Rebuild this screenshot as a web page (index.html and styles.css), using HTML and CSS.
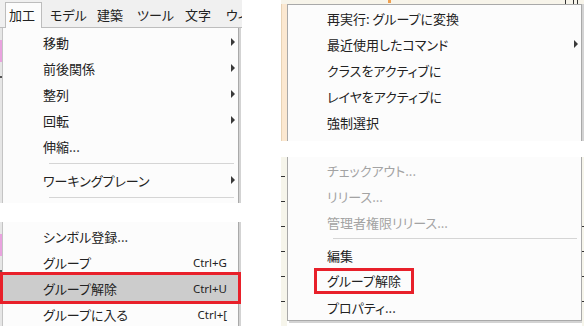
FILE: index.html
```html
<!DOCTYPE html>
<html lang="ja">
  <head>
    <meta charset="UTF-8" />
    <meta name="viewport" content="width=device-width, initial-scale=1.0" />
    <title>加工メニューとコンテキストメニュー</title>
    <link rel="stylesheet" href="styles.css">
  </head>
  <body>
    <div class="shot">
      <!-- Left: menu bar with the 加工 menu open -->
      <section class="panel-left">
        <div class="menubar">
          <span class="menubar-item is-open">加工</span>
          <span class="menubar-item w47">モデル</span>
          <span class="menubar-item w40">建築</span>
          <span class="menubar-item w48">ツール</span>
          <span class="menubar-item w41">文字</span>
          <span class="menubar-item">ウィンドウ</span>
        </div>

        <div class="part part-left-top">
          <div class="edge edge-left"></div>
          <div class="dropdown">
            <div class="row has-sub">移動<span class="arrow"></span></div>
            <div class="row has-sub">前後関係<span class="arrow"></span></div>
            <div class="row has-sub">整列<span class="arrow"></span></div>
            <div class="row has-sub">回転<span class="arrow"></span></div>
            <div class="row">伸縮...</div>
            <div class="sep"></div>
            <div class="row has-sub">ワーキングプレーン<span class="arrow"></span></div>
            <div class="sep"></div>
          </div>
        </div>

        <div class="cut cut-left"></div>

        <div class="part part-left-bottom">
          <div class="edge edge-left"></div>
          <div class="dropdown">
            <div class="row">シンボル登録...</div>
            <div class="row">グループ<span class="shortcut">Ctrl+G</span></div>
            <div class="row is-hover marked">グループ解除<span class="shortcut">Ctrl+U</span></div>
            <div class="row">グループに入る<span class="shortcut">Ctrl+[</span></div>
          </div>
        </div>
      </section>

      <!-- Right: context menu on the drawing area -->
      <section class="panel-right">
        <div class="topband"></div>

        <div class="part part-right-top">
          <div class="edge edge-peach"></div>
          <div class="ctx ctx-top">
            <div class="row">再実行: グループに変換</div>
            <div class="row has-sub">最近使用したコマンド<span class="arrow"></span></div>
            <div class="row">クラスをアクティブに</div>
            <div class="row">レイヤをアクティブに</div>
            <div class="row">強制選択</div>
          </div>
        </div>

        <div class="cut cut-right"></div>

        <div class="part part-right-bottom">
          <div class="edge edge-cream"></div>
          <div class="ctx ctx-bottom">
            <div class="row is-disabled">チェックアウト...</div>
            <div class="row is-disabled">リリース...</div>
            <div class="row is-disabled">管理者権限リリース...</div>
            <div class="sep"></div>
            <div class="row">編集</div>
            <div class="row"><span class="mark">グループ解除</span></div>
            <div class="row">プロパティ...</div>
          </div>
          <div class="edge edge-ticks"></div>
        </div>
      </section>
    </div>
  </body>
</html>
```

FILE: styles.css
```css
body {
  margin: 0;
  padding: 0;
  background-color: #fff;
  font-family: "Noto Sans CJK JP", "Noto Sans", sans-serif;
  font-size: 13px;
  font-feature-settings: "palt";
  color: #222;
}

.shot {
  display: flex;
  width: 584px;
  height: 326px;
  overflow: hidden;
}

/* ---------- left panel ---------- */

.panel-left {
  width: 242px;
  flex-shrink: 0;
  overflow: hidden;
}

.menubar {
  display: flex;
  align-items: flex-end;
  height: 28px;
  padding-left: 5px;
  white-space: nowrap;
  background: linear-gradient(#bdbdbd, #bdbdbd) left bottom / 100% 1px no-repeat, #f0f0f0;
}

.menubar-item {
  flex-shrink: 0;
  height: 25px;
  line-height: 24px;
  padding-left: 8px;
}

.menubar-item.is-open {
  padding: 0 6px 0 3px;
  background-color: #fcfcfc;
  border: 1px solid #bdbdbd;
  border-bottom: 0;
}

.w47 { width: 39px; }
.w40 { width: 32px; }
.w48 { width: 40px; }
.w41 { width: 33px; }

.part {
  display: flex;
  overflow: hidden;
}

.part-left-top {
  height: 175px;
}

.part-left-bottom {
  height: 104px;
}

.cut-left {
  height: 19px;
}

.edge-left {
  width: 2px;
  flex-shrink: 0;
  background:
    linear-gradient(#e9a3df, #e9a3df) 0 12px / 2px 22px no-repeat,
    linear-gradient(#555, #555) 0 48px / 2px 2px no-repeat,
    #e6e6e6;
}

.dropdown {
  width: 235px;
  padding-top: 1px;
  background-color: #fcfcfc;
  border-left: 1px solid #c4c4c4;
  border-right: 1px solid #a9a9a9;
  box-shadow: 2px 0 0 #d3d3d3;
}

.row {
  display: flex;
  align-items: center;
  height: 26px;
  padding: 0 3px 0 40px;
  white-space: nowrap;
}

.shortcut {
  margin-left: auto;
  margin-right: 8px;
  font-family: "Noto Sans", sans-serif;
  font-size: 11.5px;
  font-feature-settings: normal;
}

.arrow {
  margin-left: auto;
  width: 0;
  height: 0;
  border-left: 4px solid #3a3a3a;
  border-top: 4px solid transparent;
  border-bottom: 4px solid transparent;
}

.sep {
  height: 1px;
  margin: 4px 4px 3px 46px;
  background-color: #d5d5d5;
}

.row.is-hover {
  background-color: #cccccc;
}

.row.marked {
  outline: 3px solid #e8202a;
}

/* ---------- right panel ---------- */

.panel-right {
  width: 303px;
  margin-left: 39px;
  flex-shrink: 0;
}

.topband {
  height: 4px;
  background:
    linear-gradient(#f0a050, #f0a050) 107px 0 / 3px 3px no-repeat,
    linear-gradient(#333, #333) 284px 0 / 1px 4px no-repeat,
    linear-gradient(#333, #333) 292px 0 / 1px 4px no-repeat,
    linear-gradient(#333, #333) 296px 0 / 1px 4px no-repeat,
    #f7f4ea;
}

.part-right-top {
  height: 137px;
}

.cut-right {
  height: 16px;
}

.part-right-bottom {
  height: 169px;
}

.edge {
  flex-shrink: 0;
}

.edge-peach {
  width: 6px;
  background: linear-gradient(90deg, #e8d3b5 0, #e8d3b5 1px, #fbe8d1 1px);
}

.edge-cream {
  width: 6px;
  background:
    repeating-linear-gradient(180deg, transparent 0, transparent 19px, #333 19px, #333 20px, transparent 20px, transparent 25px) 0 0 / 4px 100% no-repeat,
    #f6f5eb;
}

.edge-ticks {
  width: 2px;
  background:
    repeating-linear-gradient(180deg, transparent 0, transparent 19px, #333 19px, #333 20px, transparent 20px, transparent 25px) 0 50px / 2px 100% no-repeat,
    #f6f5eb;
}

.ctx {
  width: 293px;
  background-color: #fcfcfc;
  border-left: 1px solid #a9a9a9;
  border-right: 1px solid #a9a9a9;
}

.ctx-top {
  border-top: 1px solid #a9a9a9;
  box-shadow: 2px 0 0 #d3d3d3;
}

.ctx-bottom {
  align-self: flex-start;
  border-bottom: 1px solid #a9a9a9;
  box-shadow: 2px 2px 0 #d3d3d3;
}

.ctx .row {
  padding: 0 3px 0 39px;
}

.ctx .sep {
  margin: 3px 4px 3px 45px;
}

.row.is-disabled {
  color: #a3a3a3;
}

.mark {
  display: inline-block;
  line-height: 20px;
  padding: 0 10px;
  margin-left: -10px;
  outline: 3px solid #e8202a;
}
```
